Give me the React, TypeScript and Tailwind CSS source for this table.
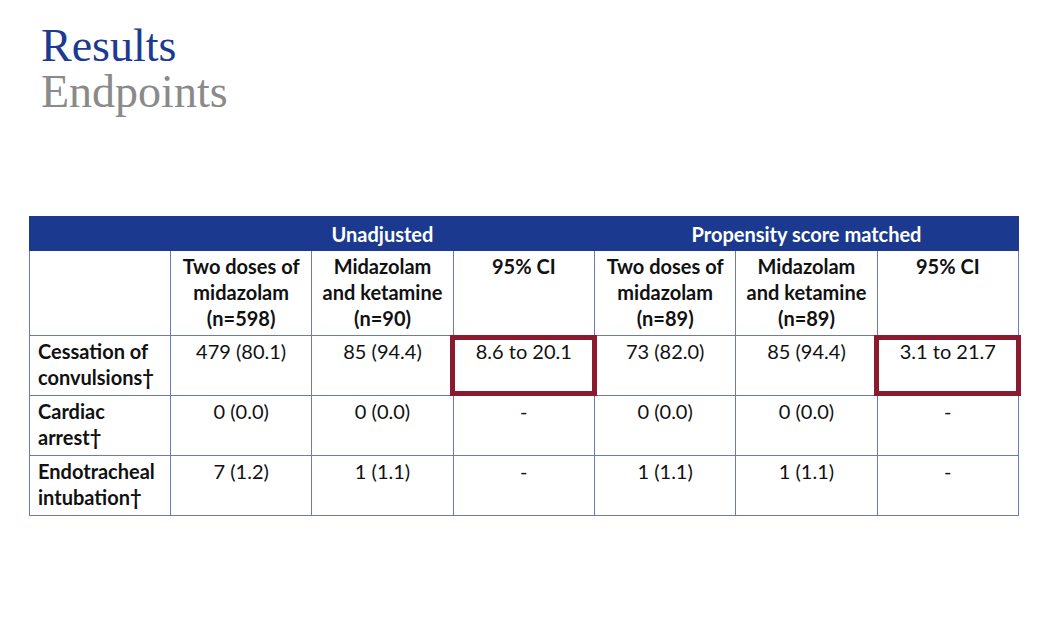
import React from 'react';

const cell = 'border border-[#6a7bb0] align-top text-center';

const subHeads = [
  ['Two doses of', 'midazolam', '(n=598)'],
  ['Midazolam', 'and ketamine', '(n=90)'],
  ['95% CI'],
  ['Two doses of', 'midazolam', '(n=89)'],
  ['Midazolam', 'and ketamine', '(n=89)'],
  ['95% CI'],
];

const rows = [
  { label: ['Cessation of', 'convulsions†'], values: ['479 (80.1)', '85 (94.4)', '8.6 to 20.1', '73 (82.0)', '85 (94.4)', '3.1 to 21.7'] },
  { label: ['Cardiac', 'arrest†'], values: ['0 (0.0)', '0 (0.0)', '-', '0 (0.0)', '0 (0.0)', '-'] },
  { label: ['Endotracheal', 'intubation†'], values: ['7 (1.2)', '1 (1.1)', '-', '1 (1.1)', '1 (1.1)', '-'] },
];

export default function App() {
  return (
    <div className="w-[1041px] h-[637px] bg-white overflow-hidden">
      <div className="pl-[41px] pt-[23px] font-['Liberation_Serif',serif] text-[46px] leading-[46px]">
        <div className="text-[#1d3a92]">Results</div>
        <div className="text-[#8a8a8a]">Endpoints</div>
      </div>

      <div className="relative ml-[29px] mt-[101px] w-[990px]">
        <table className="w-full table-fixed border-collapse font-['Lato','Open_Sans',sans-serif] text-[20px] leading-[26px] text-[#111]">
          <colgroup>
            <col className="w-[141px]" />
            <col /><col /><col /><col /><col /><col />
          </colgroup>
          <thead>
            <tr className="h-[34px] bg-[#1b3a8f] text-white font-bold">
              <th className="border border-[#1b3a8f]" />
              <th colSpan={3} className="border border-[#1b3a8f] text-center">Unadjusted</th>
              <th colSpan={3} className="border border-[#1b3a8f] text-center">Propensity score matched</th>
            </tr>
            <tr className="h-[85px]">
              <th className={cell} />
              {subHeads.map((lines, i) => (
                <th key={i} className={`${cell} font-bold pt-[2px]`}>
                  {lines.map((l, j) => <div key={j}>{l}</div>)}
                </th>
              ))}
            </tr>
          </thead>
          <tbody>
            {rows.map((r, i) => (
              <tr key={i} className="h-[60px]">
                <td className={`${cell} !text-left font-bold pl-[8px] pt-[2px]`}>
                  {r.label.map((l, j) => <div key={j}>{l}</div>)}
                </td>
                {r.values.map((v, j) => (
                  <td key={j} className={`${cell} pt-[2px]`}>{v}</td>
                ))}
              </tr>
            ))}
          </tbody>
        </table>

        {/* highlight boxes */}
        <div className="absolute left-[421px] top-[119px] w-[147px] h-[61px] border-[5px] border-[#8b1a2f]" />
        <div className="absolute left-[845px] top-[119px] w-[147px] h-[61px] border-[5px] border-[#8b1a2f]" />
      </div>
    </div>
  );
}
